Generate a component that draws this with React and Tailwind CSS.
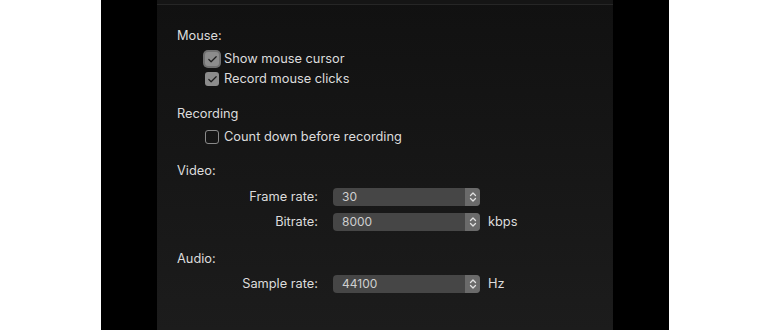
import { Check } from "lucide-react";

function Checkbox({ checked, focused }) {
  return (
    <span
      className={`flex h-[14px] w-[14px] items-center justify-center rounded-[3px] ${
        checked ? "bg-[#8c8c8c]" : "border border-[#8a8a8a] bg-transparent"
      } ${focused ? "ring-[2px] ring-[#6f6f6f]" : ""}`}
    >
      {checked && <Check size={11} strokeWidth={2.6} className="text-[#1e1e1e]" />}
    </span>
  );
}

function CheckRow({ label, checked, focused }) {
  return (
    <div className="flex h-[20px] items-center gap-[5px] pl-[28px]">
      <Checkbox checked={checked} focused={focused} />
      <span>{label}</span>
    </div>
  );
}

function Stepper() {
  return (
    <div className="flex w-[15px] items-center justify-center rounded-r-[4px] bg-[#6a6a6a]">
      <svg width="8" height="12" viewBox="0 0 8 12" fill="none" stroke="#e0e0e0" strokeWidth="1.3" strokeLinecap="round" strokeLinejoin="round">
        <path d="M1.5 4.5 L4 2 L6.5 4.5" />
        <path d="M1.5 7.5 L4 10 L6.5 7.5" />
      </svg>
    </div>
  );
}

function SelectRow({ label, value, unit }) {
  return (
    <div className="flex h-[20px] items-center">
      <span className="w-[141px] text-right">{label}</span>
      <div className="ml-[15px] flex h-[18px] w-[147px] rounded-[4px] bg-[#464646]">
        <span className="flex-1 pl-[9px] text-[12px] leading-[18px] text-[#cfcfcf]">{value}</span>
        <Stepper />
      </div>
      {unit && <span className="ml-[8px]">{unit}</span>}
    </div>
  );
}

export default function App() {
  return (
    <div className="flex h-[330px] w-[770px] bg-white font-['Inter',sans-serif] text-[12.8px] text-[#dcdcdc]">
      <div className="w-[101px] bg-white" />
      <div className="w-[56px] bg-black" />

      {/* Preferences panel */}
      <div className="flex w-[456px] flex-col bg-gradient-to-b from-[#111111] to-[#1c1c1c]">
        <div className="h-[5px] border-b border-[#262626] bg-[#151515]" />
        <div className="flex flex-col pl-[20px] pt-[21px]">
          <div className="flex h-[20px] items-center">Mouse:</div>
          <div className="mt-[3px]">
            <CheckRow label="Show mouse cursor" checked focused />
            <CheckRow label="Record mouse clicks" checked />
          </div>

          <div className="mt-[15px] flex h-[20px] items-center">Recording</div>
          <div className="mt-[3px]">
            <CheckRow label="Count down before recording" />
          </div>

          <div className="mt-[14px] flex h-[20px] items-center">Video:</div>
          <div className="mt-[6px] flex flex-col gap-[5px]">
            <SelectRow label="Frame rate:" value="30" />
            <SelectRow label="Bitrate:" value="8000" unit="kbps" />
          </div>

          <div className="mt-[17px] flex h-[20px] items-center">Audio:</div>
          <div className="mt-[5px]">
            <SelectRow label="Sample rate:" value="44100" unit="Hz" />
          </div>
        </div>
      </div>

      <div className="w-[56px] bg-black" />
      <div className="flex-1 bg-white" />
    </div>
  );
}
